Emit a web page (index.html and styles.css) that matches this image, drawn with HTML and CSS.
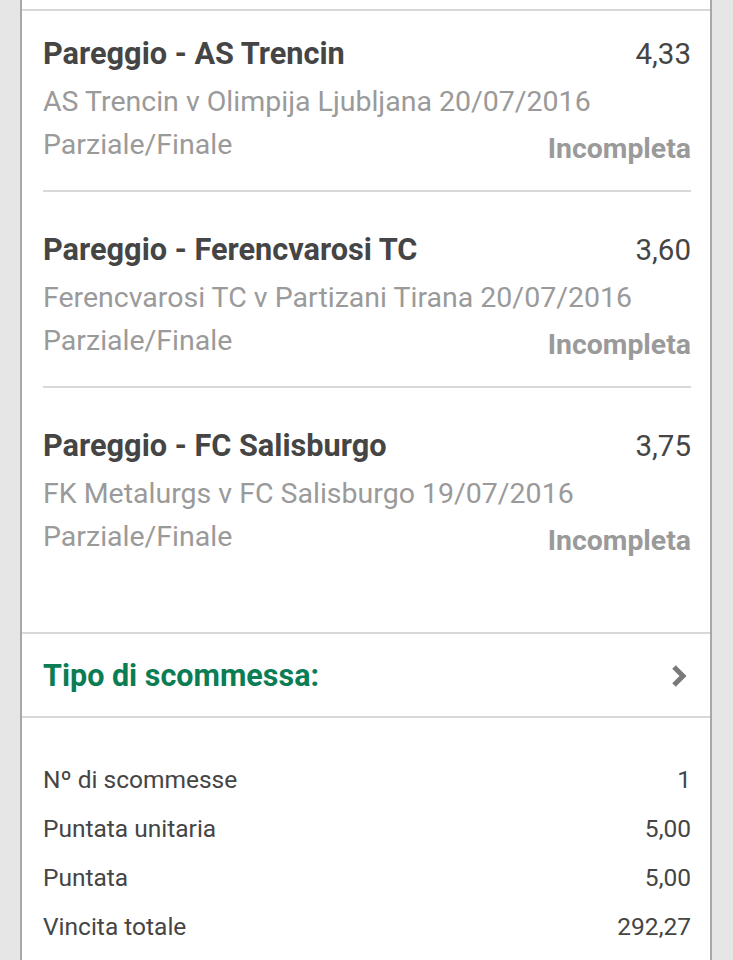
FILE: index.html
```html
<!DOCTYPE html>
<html lang="it">
<head>
<meta charset="utf-8">
<title>Scommessa</title>
<link rel="stylesheet" href="styles.css">
</head>
<body>
<div class="card">
  <div class="head"></div>
  <div class="selections">
    <div class="sel first">
      <div class="row title-row"><span class="title">Pareggio - AS Trencin</span><span class="odds">4,33</span></div>
      <div class="sub">AS Trencin v Olimpija Ljubljana 20/07/2016</div>
      <div class="row foot"><span class="market">Parziale/Finale</span><span class="status">Incompleta</span></div>
    </div>
    <div class="sel">
      <div class="row title-row"><span class="title">Pareggio - Ferencvarosi TC</span><span class="odds">3,60</span></div>
      <div class="sub">Ferencvarosi TC v Partizani Tirana 20/07/2016</div>
      <div class="row foot"><span class="market">Parziale/Finale</span><span class="status">Incompleta</span></div>
    </div>
    <div class="sel last">
      <div class="row title-row"><span class="title">Pareggio - FC Salisburgo</span><span class="odds">3,75</span></div>
      <div class="sub">FK Metalurgs v FC Salisburgo 19/07/2016</div>
      <div class="row foot"><span class="market">Parziale/Finale</span><span class="status">Incompleta</span></div>
    </div>
  </div>
  <div class="type">
    <span class="type-label">Tipo di scommessa:</span>
    <svg class="chev" width="18" height="24" viewBox="0 0 18 24"><polyline points="4,3 13,12 4,21" fill="none" stroke="#7a7a7a" stroke-width="5" stroke-linejoin="miter"/></svg>
  </div>
  <div class="summary">
    <div class="srow"><span>Nº di scommesse</span><span>1</span></div>
    <div class="srow"><span>Puntata unitaria</span><span>5,00</span></div>
    <div class="srow"><span>Puntata</span><span>5,00</span></div>
    <div class="srow"><span>Vincita totale</span><span>292,27</span></div>
  </div>
</div>
</body>
</html>
```

FILE: styles.css
```css
html, body {
  margin: 0;
  padding: 0;
  background: #e6e6e6;
  font-family: Roboto, "Liberation Sans", sans-serif;
}
.card {
  margin: 0 21px 0 20px;
  background: #fff;
  border-left: 2px solid #a8a8a8;
  border-right: 2px solid #a8a8a8;
  min-height: 960px;
  box-sizing: border-box;
}
.head {
  height: 9px;
  border-bottom: 2px solid #d8d8d8;
}
.selections {
  padding: 0 19px 0 21px;
}
.sel {
  padding: 38px 0 26px;
  border-bottom: 2px solid #d8d8d8;
}
.sel.first { padding-top: 23px; }
.sel.last { border-bottom: none; padding-bottom: 76px; }
.row {
  display: flex;
  justify-content: space-between;
  align-items: flex-start;
}
.title-row { height: 40px; line-height: 40px; }
.title {
  font-size: 30.7px;
  font-weight: 700;
  color: #454545;
}
.odds {
  font-size: 29.5px;
  color: #454545;
}
.sub {
  height: 56px;
  line-height: 56px;
  font-size: 28.5px;
  color: #9a9a9a;
  white-space: nowrap;
}
.foot { height: 34px; line-height: 30px; }
.market {
  font-size: 28.5px;
  color: #9a9a9a;
}
.status {
  font-size: 28.4px;
  font-weight: 700;
  color: #9a9a9a;
  margin-top: 4px;
}
.type {
  display: flex;
  justify-content: space-between;
  align-items: center;
  border-top: 2px solid #d8d8d8;
  border-bottom: 2px solid #d8d8d8;
  height: 82px;
  padding: 0 22px 0 21px;
}
.type-label {
  font-size: 30.5px;
  font-weight: 700;
  color: #0b7d55;
}
.chev { display: block; margin-top: 2px; }
.summary {
  padding: 37px 19px 0 21px;
}
.srow {
  display: flex;
  justify-content: space-between;
  height: 49px;
  line-height: 49px;
  font-size: 24.5px;
  color: #454545;
}
```
